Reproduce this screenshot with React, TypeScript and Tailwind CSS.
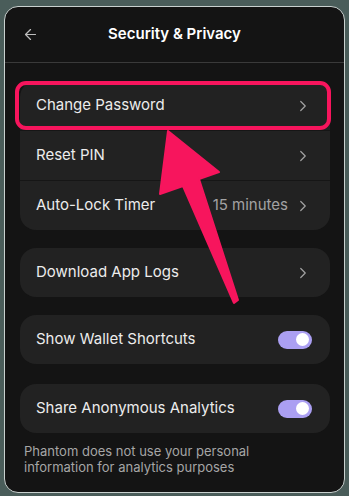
import { ChevronRight, ArrowLeft } from 'lucide-react';

type Row = { label: string; value?: string };

function Chevron() {
  return <ChevronRight size={18} strokeWidth={1.6} className="text-[#a3a3a3] shrink-0" />;
}

function Toggle() {
  return (
    <div className="w-[34px] h-[18px] rounded-full bg-[#ab9ff2] flex items-center justify-end pr-[3px] shrink-0">
      <div className="w-[13px] h-[13px] rounded-full bg-white" />
    </div>
  );
}

function NavRow({ label, value }: Row) {
  return (
    <div className="h-[49px] flex items-center justify-between pl-4 pr-[18px]">
      <span className="text-[15px] text-[#ececec]">{label}</span>
      <div className="flex items-center gap-[6px]">
        {value && <span className="text-[15px] text-[#a3a3a3]">{value}</span>}
        <Chevron />
      </div>
    </div>
  );
}

function ToggleRow({ label }: { label: string }) {
  return (
    <div className="h-[49px] flex items-center justify-between pl-4 pr-[18px] bg-[#222222] rounded-[16px]">
      <span className="text-[15px] text-[#ececec]">{label}</span>
      <Toggle />
    </div>
  );
}

export default function App() {
  const group: Row[] = [
    { label: 'Change Password' },
    { label: 'Reset PIN' },
    { label: 'Auto-Lock Timer', value: '15 minutes' },
  ];

  return (
    <div
      className="w-[349px] h-[496px] bg-[#4a5d5a] pt-[6px] pl-[4px] relative overflow-hidden"
      style={{ fontFamily: 'Inter, "Noto Sans", sans-serif' }}
    >
      <div className="w-[341px] h-[487px] bg-[#141414] rounded-[14px] border border-[#c9d1cf] flex flex-col">
        <div className="h-[56px] shrink-0 flex items-center relative border-b border-[#3a3a3a]">
          <ArrowLeft size={17} strokeWidth={1.75} className="absolute left-[17px] text-[#bdbdbd]" />
          <h1 className="w-full text-center text-[15px] font-semibold text-white">Security &amp; Privacy</h1>
        </div>

        <div className="pl-[15px] pr-[14px] pt-[18px] flex flex-col">
          <div className="bg-[#222222] rounded-[16px] flex flex-col">
            {group.map((r, i) => (
              <div key={r.label}>
                {i > 0 && <div className="h-px bg-[#161616]" />}
                <NavRow {...r} />
              </div>
            ))}
          </div>

          <div className="mt-[18px] bg-[#222222] rounded-[16px]">
            <NavRow label="Download App Logs" />
          </div>

          <div className="mt-[18px]">
            <ToggleRow label="Show Wallet Shortcuts" />
          </div>

          <div className="mt-[20px]">
            <ToggleRow label="Share Anonymous Analytics" />
          </div>

          <p className="mt-[10px] px-[4px] text-[13px] leading-[16px] text-[#a6a6a6]">
            Phantom does not use your personal
            <br />
            information for analytics purposes
          </p>
        </div>
      </div>

      {/* highlight box */}
      <div className="absolute left-[15px] top-[81px] w-[316px] h-[49px] rounded-[11px] border-[4px] border-[#f7155d]" />

      {/* arrow */}
      <svg className="absolute left-0 top-0" width="349" height="496" viewBox="0 0 349 496">
        <polygon
          points="168,131 219,172 199,179 238,300 234,303 183,186 160,194"
          fill="#f7155d"
          strokeLinejoin="round"
          stroke="#f7155d"
          strokeWidth="2"
        />
      </svg>
    </div>
  );
}
